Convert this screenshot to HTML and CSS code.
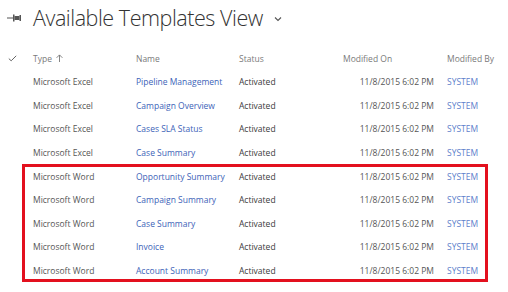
FILE: index.html
```html
<!DOCTYPE html>
<html>
<head>
<meta charset="utf-8">
<link rel="stylesheet" href="styles.css">
</head>
<body>
<div class="page">
  <header class="title-bar">
    <svg class="pin" width="16" height="10" viewBox="0 0 16 10">
      <rect x="0" y="4.5" width="6" height="1" fill="#555"/>
      <rect x="6" y="1.5" width="1.5" height="7" fill="#555"/>
      <rect x="7.5" y="3" width="5" height="4" fill="#555"/>
      <rect x="12.5" y="2" width="1.5" height="6" fill="#555"/>
    </svg>
    <h1 class="title">Available Templates View</h1>
    <svg class="chev" width="8" height="6" viewBox="0 0 8 6">
      <path d="M1 1.5 L4 4.5 L7 1.5" fill="none" stroke="#555" stroke-width="1.1"/>
    </svg>
  </header>
  <div class="grid">
    <div class="row head">
      <span class="c0"><svg width="9" height="7" viewBox="0 0 9 7"><path d="M0.8 3.6 L3.2 5.8 L8.2 0.8" fill="none" stroke="#666" stroke-width="1"/></svg></span>
      <span class="c1">Type <svg class="arrow" width="7" height="8" viewBox="0 0 7 8"><path d="M3.5 8 V1 M0.6 3.8 L3.5 0.9 L6.4 3.8" fill="none" stroke="#777" stroke-width="0.9"/></svg></span>
      <span class="c2">Name</span>
      <span class="c3">Status</span>
      <span class="c4">Modified On</span>
      <span class="c5">Modified By</span>
    </div>
    <div class="row"><span class="c0"></span><span class="c1">Microsoft Excel</span><span class="c2 link">Pipeline Management</span><span class="c3">Activated</span><span class="c4 date">11/8/2015 6:02 PM</span><span class="c5 sys">SYSTEM</span></div>
    <div class="row"><span class="c0"></span><span class="c1">Microsoft Excel</span><span class="c2 link">Campaign Overview</span><span class="c3">Activated</span><span class="c4 date">11/8/2015 6:02 PM</span><span class="c5 sys">SYSTEM</span></div>
    <div class="row"><span class="c0"></span><span class="c1">Microsoft Excel</span><span class="c2 link">Cases SLA Status</span><span class="c3">Activated</span><span class="c4 date">11/8/2015 6:02 PM</span><span class="c5 sys">SYSTEM</span></div>
    <div class="row"><span class="c0"></span><span class="c1">Microsoft Excel</span><span class="c2 link">Case Summary</span><span class="c3">Activated</span><span class="c4 date">11/8/2015 6:02 PM</span><span class="c5 sys">SYSTEM</span></div>
    <div class="highlight">
      <div class="row"><span class="c0"></span><span class="c1">Microsoft Word</span><span class="c2 link">Opportunity Summary</span><span class="c3">Activated</span><span class="c4 date">11/8/2015 6:02 PM</span><span class="c5 sys">SYSTEM</span></div>
      <div class="row"><span class="c0"></span><span class="c1">Microsoft Word</span><span class="c2 link">Campaign Summary</span><span class="c3">Activated</span><span class="c4 date">11/8/2015 6:02 PM</span><span class="c5 sys">SYSTEM</span></div>
      <div class="row"><span class="c0"></span><span class="c1">Microsoft Word</span><span class="c2 link">Case Summary</span><span class="c3">Activated</span><span class="c4 date">11/8/2015 6:02 PM</span><span class="c5 sys">SYSTEM</span></div>
      <div class="row"><span class="c0"></span><span class="c1">Microsoft Word</span><span class="c2 link">Invoice</span><span class="c3">Activated</span><span class="c4 date">11/8/2015 6:02 PM</span><span class="c5 sys">SYSTEM</span></div>
      <div class="row"><span class="c0"></span><span class="c1">Microsoft Word</span><span class="c2 link">Account Summary</span><span class="c3">Activated</span><span class="c4 date">11/8/2015 6:02 PM</span><span class="c5 sys">SYSTEM</span></div>
    </div>
  </div>
</div>
</body>
</html>
```

FILE: styles.css
```css
html, body {
  margin: 0;
  padding: 0;
  background: #ffffff;
}
.page {
  width: 508px;
  height: 292px;
  font-family: "Open Sans", "Noto Sans", sans-serif;
  color: #555;
  overflow: hidden;
}
.title-bar {
  display: flex;
  align-items: center;
  height: 36px;
  padding-left: 7px;
}
.title {
  margin: 0 0 0 10px;
  font-size: 21.5px;
  font-weight: 300;
  color: #333;
  line-height: 36px;
  letter-spacing: -0.45px;
}
.chev {
  margin-left: 11px;
  margin-top: 2px;
}
.grid {
  display: flex;
  flex-direction: column;
  margin-top: 10.5px;
}
.row {
  display: grid;
  grid-template-columns: 33px 103px 103px 104px 104px 1fr;
  align-items: center;
  height: 23.56px;
  font-size: 8.5px;
  white-space: nowrap;
}
.head {
  color: #7a7a7a;
}
.c0 {
  display: flex;
  justify-content: flex-start;
  padding-left: 8px;
}
.c1 {
  display: flex;
  align-items: center;
}
.arrow {
  margin-left: 4px;
}
.link {
  color: #3d63b8;
}
.sys {
  color: #5d80cb;
}
.c3 {
  color: #3a3a3a;
}
.head .c3 {
  color: #7a7a7a;
}
.date {
  text-align: right;
  padding-right: 13px;
  color: #555;
}
.highlight {
  position: relative;
}
.highlight::after {
  content: "";
  position: absolute;
  left: 22px;
  right: 20px;
  top: 0;
  bottom: 0;
  border: 3px solid #e3101e;
  pointer-events: none;
}
```
